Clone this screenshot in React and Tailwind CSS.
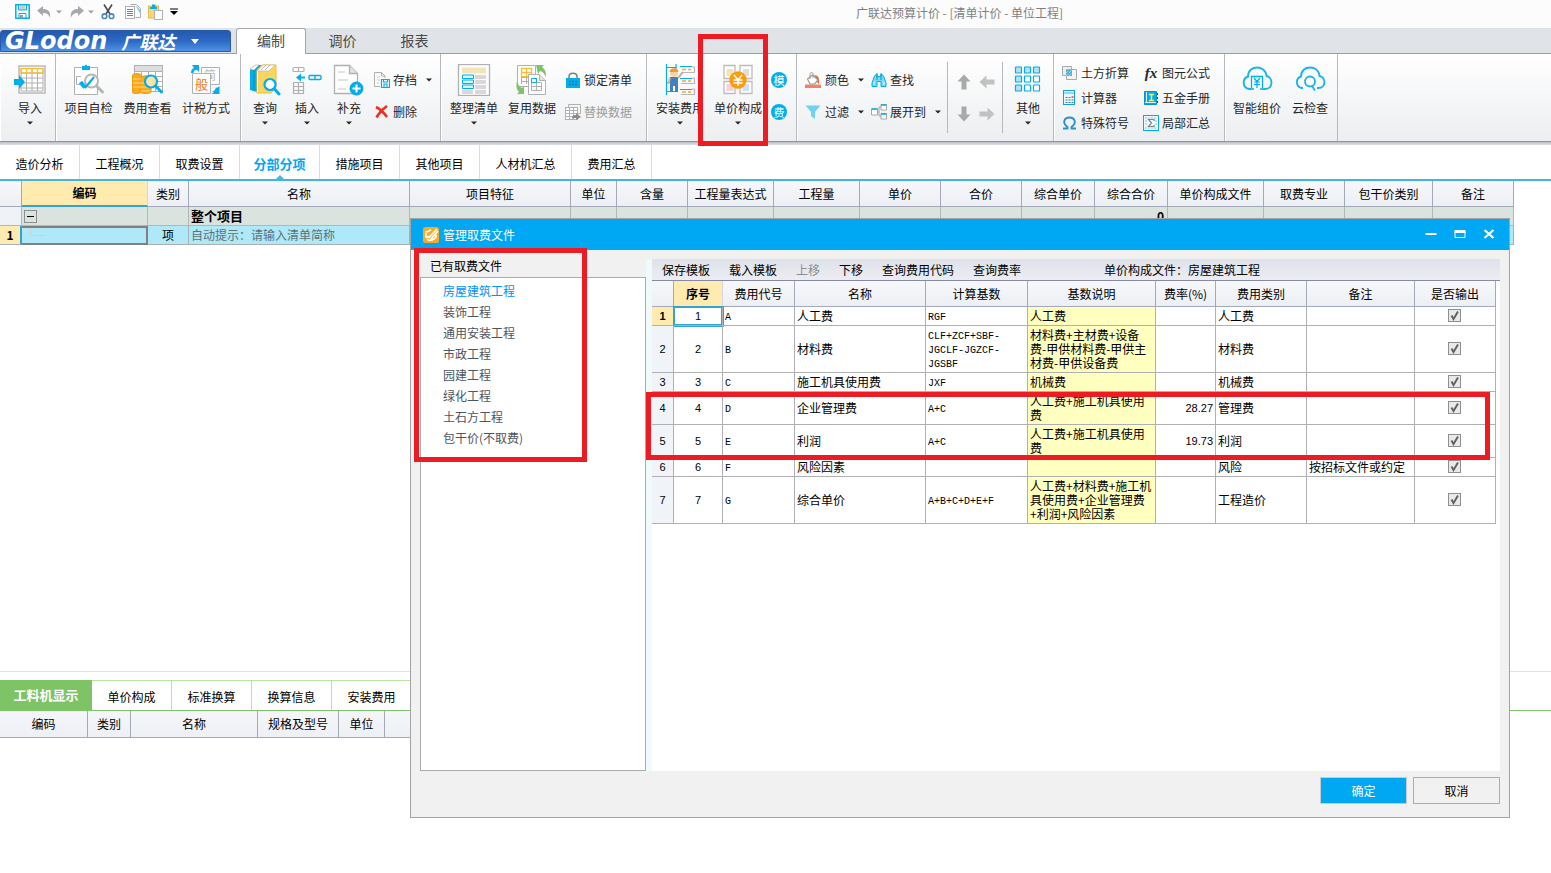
import React from "react";

const B = "#00afe9";
const G = "#b0b0b0";

function Svg({ w, h, children, className = "" }) {
  return (
    <svg width={w} height={h} viewBox={`0 0 ${w} ${h}`} fill="none" aria-hidden="true" className={`shrink-0 ${className}`}>
      {children}
    </svg>
  );
}

function Caret({ className = "" }) {
  return (
    <Svg w={6} h={4} className={className}>
      <path d="M0 0.500h6L3 3.500z" fill="currentColor" />
    </Svg>
  );
}

/* ---------- quick access icons ---------- */
const SaveIcon = () => (
  <Svg w={15} h={15}>
    <rect x="0.800" y="0.800" width="13.400" height="13.400" stroke={B} strokeWidth="1.500" />
    <path d="M3.500 1v5h8V1M4 14V9.500h7V14" stroke={B} />
    <path d="M4.500 3h6M4.500 5h6" stroke="#9a9a9a" />
    <rect x="5" y="11" width="3" height="3" fill="#9a9a9a" />
  </Svg>
);
const UndoIcon = ({ flip }) => (
  <Svg w={15} h={14}>
    <path transform={flip ? "matrix(-1 0 0 1 15 0)" : undefined} d="M0 5.500 6 1v3c5 0 8 2.500 7 9-1-3.500-3-5-7-5v3z" fill="#a5a9ad" />
  </Svg>
);
const CutIcon = () => (
  <Svg w={14} h={16}>
    <path d="M3 0.500 9 10M11 0.500 5 10" stroke="#4c4c4c" strokeWidth="1.600" />
    <circle cx="3.500" cy="12.200" r="2.300" stroke="#4a87bd" strokeWidth="1.600" />
    <circle cx="10.500" cy="12.200" r="2.300" stroke="#4a87bd" strokeWidth="1.600" />
  </Svg>
);
const CopyIcon = () => (
  <Svg w={16} h={15}>
    <path d="M5.500 0.500h6l4 4v9h-5" stroke={G} />
    <path d="M10 1l5.500 5v4z" fill="#6fcff0" />
    <rect x="0.500" y="2.500" width="9" height="12" fill="#fff" stroke={G} />
    <path d="M2 5.500h6M2 7.500h6M2 9.500h6M2 11.500h6" stroke={B} />
  </Svg>
);
const PasteIcon = () => (
  <Svg w={16} h={16}>
    <rect x="0.500" y="2" width="10" height="12" fill="#fcd56d" stroke="#e7b94c" />
    <path d="M2 3h7v2H2zM4 0.500h3.500V3H4z" fill={B} />
    <rect x="6.500" y="6.500" width="8" height="9" fill="#fff" stroke={G} />
  </Svg>
);

/* ---------- large ribbon icons ---------- */
const ImportIcon = () => (
  <Svg w={34} h={32}>
    <rect x="6" y="2" width="26" height="27" fill="#fff" stroke={G} strokeWidth="1.300" />
    <path d="M8 9h22M8 14h22M8 19h22M8 24h22M8 4.500V27M13.500 4v23M19 4v23M24.500 4v23M30 4v23M8 27h22" stroke={G} />
    <path d="M8 4.500h22V9H8zM13.500 4.500V9M19 4.500V9M24.500 4.500V9" stroke="#f8bf3a" strokeWidth="1.300" />
    <path d="M1 15h5v-4l6 7-6 7v-4H1z" fill={B} />
  </Svg>
);
const CheckDocIcon = () => (
  <Svg w={34} h={32}>
    <path d="M2.500 3.500h23v27h-23z" fill="#fff" stroke={G} />
    <path d="M10 2h2.500L14 0.500 15.500 2H18v4h-8z" fill={B} />
    <path d="M9 12.500H4.500v8H8" stroke={G} />
    <circle cx="19.500" cy="17" r="6.500" fill="#fff" stroke="#b5b5b5" strokeWidth="2" />
    <path d="m24.500 22 6 6" stroke="#b5b5b5" strokeWidth="3" strokeLinecap="round" />
    <path d="m8.500 18 4.500 5.500" stroke={B} strokeWidth="4" />
    <path d="m13 24 9-11" stroke={B} strokeWidth="2" />
  </Svg>
);
const FeeViewIcon = () => (
  <Svg w={34} h={32}>
    <path d="M3.500 1.500h28v26h-28z" fill="#fff" stroke={G} />
    <path d="M3.500 1.500h28v6h-28z" fill="#dedede" stroke={G} />
    <path d="M3 12.500h28M3 17.500h28M3 22.500h28M10.500 7v21M17.500 7v21M24.500 7v21" stroke={G} />
    <path d="M1.500 11c2-2 7-2 9 0v17c-2 2-9 2-9 0z" fill="#fba91d" stroke="#ef9a10" />
    <path d="M9 14c3-3 9-3 11 0v14c-2 2-9 2-11 0z" fill="#fba91d" stroke="#ef9a10" />
    <path d="M2 15h8M2 19h8M2 23h8M10 19h9M10 23h9M10 27h9" stroke="#ffd980" />
    <circle cx="20" cy="17.500" r="6" fill="#ffe3a6" stroke={B} strokeWidth="2.200" />
    <path d="m24.500 22 6 6" stroke={B} strokeWidth="3" strokeLinecap="round" />
  </Svg>
);
const TaxIcon = () => (
  <Svg w={34} h={32}>
    <path d="M12.500 3.500h18v17h-18z" fill="#fff" stroke={G} />
    <text x="15" y="16" fontSize="12" fill="#b9b9b9" fontFamily="Noto Sans CJK SC, sans-serif">简</text>
    <path d="M3.500 9.500h18v20h-18z" fill="#fff" stroke={G} />
    <text x="6" y="25" fontSize="13" fill="#ea7a1c" fontFamily="Noto Sans CJK SC, sans-serif">般</text>
    <path d="M2 9c0-3 1-4 3-5L3 1h7v7L8 6C5 6 5 7 4.500 9zM30.500 22v8h-8l2.500-2-2-1c3 0 3-1 4-4l1 1z" fill={B} />
  </Svg>
);
const QueryIcon = () => (
  <Svg w={34} h={32}>
    <path d="M2 5 7 1h7v24l-5 3-7-2z" fill={B} />
    <path d="M9 6l5-5h14v23l-5 5H9z" fill="#fcd55f" stroke="#f1bd47" />
    <path d="M2 5 7 1h4L6 6zM9 7l6-6h12l-6 6z" fill="#fff" stroke="#bdbdbd" strokeWidth="0.800" />
    <path d="m13 6 5-5M17 6l5-5" stroke="#aaa" strokeWidth="0.800" />
    <path d="M9.500 7v21" stroke="#fff" />
    <path d="M6 6v20" stroke="#0b8fc0" />
    <circle cx="22" cy="20.500" r="5.500" fill="#fff" stroke={B} strokeWidth="2.200" />
    <path d="m26.500 25 4.500 5" stroke={B} strokeWidth="3" strokeLinecap="round" />
  </Svg>
);
const InsertIcon = () => (
  <Svg w={34} h={32}>
    <path d="M4 3.500h9a1 1 0 0 1 1 1v2a1 1 0 0 1-1 1H4a1 1 0 0 1-1-1v-2a1 1 0 0 1 1-1zM8.500 3.500v4M3.500 18.500h10v11h-10zM8.500 18.500v11M3.500 22.500h10M3.500 26.500h10" stroke={G} strokeWidth="1.200" />
    <path d="M6 13.500l5-4v3h4v2h-4v3z" fill={B} />
    <path d="M20 11.500h10a1 1 0 0 1 1 1v2a1 1 0 0 1-1 1H20a1 1 0 0 1-1-1v-2a1 1 0 0 1 1-1zM25 11.500v4" stroke={B} strokeWidth="1.400" />
  </Svg>
);
const AddIcon = () => (
  <Svg w={34} h={32}>
    <path d="M2.500 1.500h15l8 8v20h-23z" fill="#fff" stroke={G} strokeWidth="1.300" />
    <path d="M17.500 1.500v8h8" fill="#e2e2e2" stroke={G} strokeWidth="1.300" />
    <path d="M6 8h7M6 16h10M6 25h8" stroke="#d9d9d9" strokeWidth="1.500" />
    <circle cx="24.500" cy="24.500" r="6.700" fill={B} stroke="#1b94c8" strokeWidth="0.500" />
    <path d="M24.500 20.500v8M20.500 24.500h8" stroke="#fff" strokeWidth="2" />
  </Svg>
);
const OrganizeIcon = () => (
  <Svg w={34} h={32}>
    <rect x="1.500" y="0.500" width="31" height="31" fill="#fff" stroke={G} strokeWidth="1.300" />
    <path d="M5 3.500h24v6H5z" fill="#f3e4b9" />
    <path d="M18 11h11v4H18zM18 16h11v4H18zM18 21h11v4H18zM18 26h11v4H18zM5 26h11v4H5z" fill="#d9d7db" />
    <path d="M5.500 11h11v3.500h-11zM5.500 16h11v3.500h-11zM5.500 21h11v3.500h-11z" fill="#d9f3fb" stroke={B} />
  </Svg>
);
const ReuseIcon = () => (
  <Svg w={34} h={32}>
    <path d="M2.500 1.500h18v21h-18z" fill="#fff" stroke={G} />
    <path d="M6.500 9v11M11.500 9v11M6 13.500h10M6 17.500h10" stroke={G} />
    <path d="M6.500 4.500h10v8h-10zM11.500 4.500v8M6.500 8.500h10" stroke="#f8bf3a" strokeWidth="1.300" />
    <path d="M13.500 10.500h11l6 6v14h-17z" fill="#fff" stroke={G} />
    <path d="M24.500 10.500v6h6" fill="#e2e2e2" stroke={G} />
    <path d="M16.500 18.500h10v8h-10zM21.500 14v12M16.500 22.500h10" stroke={G} />
    <path d="M16.500 14.500h5v4h-5z" stroke={B} />
    <path d="M21 1h8l-2 2c3 2 4 5 4 10-2-4-4-6-6-6l-2 3zM2 17c1 4 3 6 5 7l2-2v8H2l2-2c-3-3-3-7-2-11z" fill="#7cc36a" />
  </Svg>
);
const InstallIcon = () => (
  <Svg w={34} h={32}>
    <path d="M3.500 0v31M13 0v6M3 3.500h10M3 18.500h9M3 27.500h9" stroke={B} strokeWidth="1.200" />
    <path d="M29 3h2.500v5.500H18M29 14h2.500v5.500H18M29 25h2.500v5.500H18" stroke="#b4b8bc" strokeWidth="1.200" />
    <path d="M17 2.500h12M17 14.500h12M17 25.500h12" stroke={B} />
    <path d="M19 5.500h4M25 5.500h3M19 17h4M25 17h3M19 28h4M25 28h3" stroke="#f4a83d" strokeWidth="1.300" />
    <circle cx="11" cy="9" r="4" fill="#f7d2ac" />
    <path d="M6.500 8c0-5 9-5 9 0z" fill="#f39b22" />
    <path d="M7 13h8v9H7z" fill="#4181be" />
    <path d="m15 14 5-6" stroke="#c6b3a0" strokeWidth="2" />
    <path d="M7 14l-2 6" stroke="#e6b98e" strokeWidth="2" />
    <path d="M7 21h3v7H7zM12 21h3v7h-3z" fill="#4181be" />
  </Svg>
);
const UnitPriceIcon = () => (
  <Svg w={34} h={32}>
    <path d="M3 1.500h11v13H3zM19 1.500h12v13H19zM3 17.500h11v12H3zM19 17.500h12v12H19z" fill="#fff" stroke="#bcbcbc" strokeWidth="1.300" />
    <path d="M5.500 5h7v7h-7z" fill="#f4e3b5" />
    <path d="M22 5h6v7h-6z" fill="#dedede" />
    <path d="M5.500 20h7v7h-7z" fill="#f3d2d6" />
    <path d="M22 20h6v7h-6z" fill="#cbe0f2" />
    <circle cx="17" cy="16" r="8.700" fill="#fb9b0d" />
    <path d="m13 11 4 5 4-5M12.500 16h9M12.500 19h9M17 16v6" stroke="#fff" strokeWidth="1.600" />
  </Svg>
);
const OtherIcon = () => (
  <Svg w={34} h={32}>
    {[3, 12, 21].map((y) =>
      [4.500, 13.500, 22.500].map((x) => (
        <rect key={`${x}-${y}`} x={x} y={y} width="6" height="6" rx="0.600" fill={y === 3 || x === 4.5 ? "#b9dff0" : "#fff"} stroke={B} strokeWidth="1.200" />
      ))
    )}
  </Svg>
);
const CloudPriceIcon = () => (
  <Svg w={34} h={32}>
    <path d="M11 25H9a6.500 6.500 0 0 1-1-12.500C8 6 13 3.500 17 3.500S26 6 26.500 12c7 1.500 6.500 13-1 13h-2" stroke="#18b5e6" strokeWidth="1.900" />
    <path d="M11.500 24V12.500h11V24M10 25h4M20 25h4" stroke={B} strokeWidth="1.300" />
    <path d="m14 14 3 3.500L20 14M14 18h6M14 20.500h6M17 17.500V24" stroke={B} strokeWidth="1.200" />
  </Svg>
);
const CloudCheckIcon = () => (
  <Svg w={34} h={32}>
    <path d="M10 24H8.500A6 6 0 0 1 8 12.500C8 6.500 12.500 3.500 17 3.500S26 6 26.500 12c7 1.500 6.500 12-1 12H24" stroke="#18b5e6" strokeWidth="1.900" />
    <circle cx="17" cy="17.500" r="5" stroke="#18b5e6" strokeWidth="1.800" />
    <path d="m19 22 3 4.500" stroke="#18b5e6" strokeWidth="1.800" />
  </Svg>
);

/* ---------- small ribbon icons ---------- */
const ArchiveIcon = () => (
  <Svg w={16} h={16}>
    <path d="M6 14.500H0.500V0.500h7l3.500 3.500v2M7.500 0.500V4H11" stroke={G} />
    <path d="M3 5h3M3 8h3M3 11h2" stroke="#c9c9c9" />
    <path d="M7.500 7.500h8v8h-8zM9.500 7.500V10h4V7.500M10 15v-3h3v3" stroke={B} strokeWidth="1.200" fill="#fff" />
  </Svg>
);
const DeleteIcon = () => (
  <Svg w={16} h={14}>
    <path d="M2 2c4 2 8 6 11 10M13 1C9 4 5 8 2.500 12.500" stroke="#ee2f24" strokeWidth="2.600" />
  </Svg>
);
const LockIcon = () => (
  <Svg w={16} h={16}>
    <path d="M4 7V4.500C4 0 12 0 12 4.500V7" stroke="#7f7f7f" strokeWidth="1.500" />
    <rect x="1" y="6" width="14" height="10" fill={B} />
    <path d="M4 9.500h2M7 9.500h2M10 9.500h2M4 12.500h2M7 12.500h2M10 12.500h2" stroke="#087ab3" strokeWidth="1.400" />
  </Svg>
);
const ReplaceIcon = () => (
  <Svg w={16} h={16}>
    <path d="M3.500 4V0.500h12v9h-4" stroke={G} />
    <rect x="0.500" y="3.500" width="12" height="12" fill="#fff" stroke={G} />
    <path d="M0.500 6.500h12M0.500 9.500h12M0.500 12.500h12M4.500 3.500v12M8.500 3.500v12" stroke={G} />
    <path d="M7 15c0-3 1-4 4-4V9l5 4-5 3v-2c-2 0-3 0-4 1z" fill="#8b8b8b" />
  </Svg>
);
const ColorIcon = () => (
  <Svg w={17} h={16}>
    <path d="M0 12.500h16V16H0z" fill="#f58266" />
    <path d="M9 3c4 0 6 3 5 9-2-1-2-3-2-5z" fill="#e2711f" />
    <path d="m2.500 7 5-4 5.500 5-3.500 4H5z" fill="#fff" stroke="#9b9b9b" strokeWidth="1.200" />
    <path d="M5 7V2c0-2 3-2 3 0v4" stroke="#9b9b9b" />
  </Svg>
);
const FilterIcon = () => (
  <Svg w={17} h={15}>
    <path d="M0.500 0.500h15L10 7v7l-4-3V7z" fill="#6fd2f3" />
  </Svg>
);
const FindIcon = () => (
  <Svg w={16} h={16}>
    <path d="M3.500 4 6 1.500v3h4v-3L12.500 4l2.500 7v3.500h-5V9.500H6v5H1V11z" fill="#7dd8f5" stroke={B} />
    <path d="M3 9.500v3M13 9.500v3" stroke="#fff" />
    <path d="M6 2v6M10 2v6" stroke="#0a93c4" />
  </Svg>
);
const ExpandIcon = () => (
  <Svg w={16} h={16}>
    <path d="M0.500 5h6v6h-6zM10 0.500h5.500V6H10zM10 9.500h5.500V15H10z" fill="#fff" stroke="#a6a6a6" />
    <path d="M0.500 5h6M10 1h5.500M10 10h5.500" stroke={B} strokeWidth="1.500" />
    <path d="M6.500 8H8M8 3v9M8 3h2M8 12h2" stroke="#a6a6a6" />
  </Svg>
);
const EarthIcon = () => (
  <Svg w={16} h={14}>
    <path d="M0.500 0.500h9v9h-9z" fill="#eee" stroke="#a9a9a9" />
    <path d="M4.500 3.500h10v10h-10z" fill="#f4f4f4" stroke="#a9a9a9" />
    <path d="M4 4h6v6H4z" fill="#4ab4d6" />
    <path d="m4 7 3-3M4 10l6-6M7 10l3-3" stroke="#d8f1fa" strokeDasharray="1 1" />
  </Svg>
);
const CalcIcon = () => (
  <Svg w={16} h={16}>
    <rect x="1.500" y="0.500" width="11" height="14" fill="#eaf8fd" stroke="#189fd0" />
    <path d="M2 3h10" stroke="#8ed9f3" strokeWidth="2" />
    <path d="M3.500 7.500h2M6.500 7.500h2M3.500 10h2M6.500 10h2M3.500 12.500h2M6.500 12.500h2M9.500 12.500h2M9.500 10h2" stroke="#3781a5" />
    <path d="M9.500 7h2" stroke="#e94b3c" strokeWidth="1.600" />
  </Svg>
);
const OmegaIcon = () => (
  <Svg w={16} h={14}>
    <path d="M1 12.500h4.500V11C0 7 2 1.500 7.500 1.500S15 7 9.500 11v1.500H14" stroke="#2b91cc" strokeWidth="1.900" />
  </Svg>
);
const BookIcon = () => (
  <Svg w={16} h={15}>
    <path d="M1.500 0.500h12v13h-12z" fill={B} stroke="#0b91ca" />
    <path d="M3.500 1v10.500M2 11.500h11" stroke="#d8f2fb" />
    <path d="M6 3.500h5M6 9.500h5M8.500 4v6" stroke="#f7ec5b" strokeWidth="1.500" />
    <path d="M14.500 2v2M14.500 6v2M14.500 10v2" stroke="#444" />
  </Svg>
);
const SumIcon = () => (
  <Svg w={16} h={16}>
    <rect x="0.500" y="0.500" width="15" height="15" fill="#eef8fb" stroke={B} />
    <path d="M2 3h12M2 13h12M2 6h2M2 9h2M12 6h2M12 9h2" stroke="#7fcbe6" strokeDasharray="2 1" />
    <path d="M11 6V4.500H5.500L8.500 8l-3 3.500H11V10" stroke="#858585" strokeWidth="1.200" />
  </Svg>
);
const Arrow = ({ dir, dark }) => {
  const rot = { up: 0, right: 90, down: 180, left: 270 }[dir];
  return (
    <Svg w={16} h={16}>
      <path transform={`rotate(${rot} 8 8)`} d="M8 0.500 14.500 7.500H10.500V15.500H5.500V7.500H1.500z" fill={dark ? "#a9a9a9" : "#c2c2c2"} />
    </Svg>
  );
};

/* ---------- ribbon building blocks ---------- */
function Big({ icon, label, caret, w = "w-[58px]" }) {
  return (
    <button type="button" className={`flex ${w} shrink-0 flex-col items-center pt-[10px] text-xs leading-4 whitespace-nowrap`}>
      {icon}
      <span className="mt-1">{label}</span>
      {caret && <Caret className="mt-[5px]" />}
    </button>
  );
}
function Small({ icon, label, caret, disabled }) {
  return (
    <button type="button" disabled={disabled} className="flex h-5 items-center gap-[3px] text-xs leading-5 whitespace-nowrap disabled:text-[#9b9b9b]">
      {icon}
      <span>{label}</span>
      {caret && <Caret className="ml-[6px]" />}
    </button>
  );
}
function Group({ w, children }) {
  return <div className={`flex ${w} shrink-0 border-r border-[#b4b8bf] bg-linear-to-b from-white to-[#eceef0] shadow-[inset_1px_0_0_#ffffff]`}>{children}</div>;
}

function Ribbon() {
  return (
    <div className="relative z-10 flex h-[88px] border-b border-[#8f9499] bg-linear-to-b from-white to-[#eceef0] text-[#262626]">
      <Group w="w-14"><Big w="w-[60px]" icon={<ImportIcon />} label="导入" caret /></Group>
      <Group w="w-[185px]">
        <div className="flex pl-[3px]">
          <Big w="w-[59px]" icon={<CheckDocIcon />} label="项目自检" />
          <Big w="w-[59px]" icon={<FeeViewIcon />} label="费用查看" />
          <Big icon={<TaxIcon />} label="计税方式" />
        </div>
      </Group>
      <Group w="w-[200px]">
        <div className="flex pl-[3px]">
          <Big w="w-[42px]" icon={<QueryIcon />} label="查询" caret />
          <Big w="w-[42px]" icon={<InsertIcon />} label="插入" caret />
          <Big w="w-[42px]" icon={<AddIcon />} label="补充" caret />
        </div>
        <div className="flex flex-col gap-3 pt-4 pl-1">
          <Small icon={<ArchiveIcon />} label="存档" caret />
          <Small icon={<DeleteIcon />} label="删除" />
        </div>
      </Group>
      <Group w="w-[206px]">
        <div className="flex pl-1">
          <Big icon={<OrganizeIcon />} label="整理清单" caret />
          <Big icon={<ReuseIcon />} label="复用数据" />
        </div>
        <div className="flex flex-col gap-3 pt-4 pl-1">
          <Small icon={<LockIcon />} label="锁定清单" />
          <Small icon={<ReplaceIcon />} label="替换数据" disabled />
        </div>
      </Group>
      <Group w="w-[150px]">
        <div className="flex pl-1">
          <Big icon={<InstallIcon />} label="安装费用" caret />
          <div className="relative">
            <Big icon={<UnitPriceIcon />} label="单价构成" caret />
            <div className="pointer-events-none absolute -top-5 -left-[11px] h-28 w-[70px] border-[5px] border-[#ed1c24]" />
          </div>
        </div>
        <div className="flex flex-col gap-4 pt-[18px] pl-1">
          <button type="button" className="size-4 rounded-full bg-[#00afe9] text-[11px] leading-4 text-white">模</button>
          <button type="button" className="size-4 rounded-full bg-[#00afe9] text-[11px] leading-4 text-white">费</button>
        </div>
      </Group>
      <Group w="w-[257px]">
        <div className="flex flex-col gap-3 pt-4 pl-2">
          <Small icon={<ColorIcon />} label="颜色" caret />
          <Small icon={<FilterIcon />} label="过滤" caret />
        </div>
        <div className="flex flex-col gap-3 pt-4 pl-[7px]">
          <Small icon={<FindIcon />} label="查找" />
          <Small icon={<ExpandIcon />} label="展开到" caret />
        </div>
        <div className="my-2 ml-[6px] grid grid-cols-2 content-center gap-x-2 gap-y-4 border-x border-[#b4b8bf] px-2">
          <Arrow dir="up" dark />
          <Arrow dir="left" />
          <Arrow dir="down" dark />
          <Arrow dir="right" />
        </div>
        <Big w="w-[50px]" icon={<OtherIcon />} label="其他" caret />
      </Group>
      <Group w="w-[171px]">
        <div className="grid grid-cols-[81px_81px] content-start gap-y-[5px] pt-[9px] pl-2">
          <Small icon={<EarthIcon />} label="土方折算" />
          <Small icon={<span className="w-4 text-center font-['Liberation_Serif',serif] text-[15px] font-bold italic">fx</span>} label="图元公式" />
          <Small icon={<CalcIcon />} label="计算器" />
          <Small icon={<BookIcon />} label="五金手册" />
          <Small icon={<OmegaIcon />} label="特殊符号" />
          <Small icon={<SumIcon />} label="局部汇总" />
        </div>
      </Group>
      <Group w="w-[113px]">
        <div className="flex pl-[3px]">
          <Big icon={<CloudPriceIcon />} label="智能组价" />
          <Big w="w-[48px]" icon={<CloudCheckIcon />} label="云检查" />
        </div>
      </Group>
    </div>
  );
}

/* ---------- main grid ---------- */
const mainCols = [
  ["", 22], ["编码", 126], ["类别", 41], ["名称", 221], ["项目特征", 161], ["单位", 46], ["含量", 71], ["工程量表达式", 86],
  ["工程量", 86], ["单价", 81], ["合价", 81], ["综合单价", 73], ["综合合价", 73], ["单价构成文件", 96], ["取费专业", 81], ["包干价类别", 88], ["备注", 81],
];

function MainGrid() {
  const rest = mainCols.slice(4);
  return (
    <table className="w-[1514px] table-fixed border-separate border-spacing-0 text-xs leading-4 whitespace-nowrap">
      <colgroup>{mainCols.map(([n, w], i) => <col key={i} style={{ width: w }} />)}</colgroup>
      <thead>
        <tr className="h-[26px]">
          {mainCols.map(([n], i) => (
            <th
              key={i}
              className={
                i === 1
                  ? "border-r border-b-2 border-r-[#d8d8d8] border-b-[#35a3d0] bg-[#ffebb0] p-0 font-bold"
                  : "border-r border-b border-[#a3a9b6] bg-linear-to-b from-[#f7f8fa] to-[#eceff5] p-0 font-normal"
              }
            >
              {n}
            </th>
          ))}
        </tr>
      </thead>
      <tbody>
        <tr className="h-[19px] bg-[#dae3de] [&>td]:border-r [&>td]:border-b [&>td]:border-[#b3b6b5] [&>td]:p-0">
          <td className="bg-[#eff2f7]" />
          <td className="pl-[2px]!">
            <button type="button" aria-label="折叠" className="flex size-[13px] items-center justify-center border border-[#8d8f8e]">
              <span className="h-px w-[7px] bg-black" />
            </button>
          </td>
          <td />
          <td className="pl-[2px]! text-[13px] font-bold">整个项目</td>
          {rest.map(([n], i) => <td key={i} className="pr-[3px]! text-right font-bold">{n === "综合合价" ? "0" : ""}</td>)}
        </tr>
        <tr className="h-[19px] bg-[#aee8f9] [&>td]:border-r [&>td]:border-b [&>td]:border-[#a8b0b4] [&>td]:p-0">
          <td className="border-r-2! border-r-[#35a3d0]! bg-[#ffebb0] text-center font-bold">1</td>
          <td className="border-2! border-l-0! border-[#808080]! pl-2!">
            <div className="-mt-2 h-2 w-4 border-b border-l border-[#c9d3d8]" />
          </td>
          <td className="text-center">项</td>
          <td className="pl-[2px]! text-[#5f7177]">自动提示：请输入清单简称</td>
          {rest.map(([n], i) => <td key={i} />)}
        </tr>
      </tbody>
    </table>
  );
}

/* ---------- dialog ---------- */
const files = ["房屋建筑工程", "装饰工程", "通用安装工程", "市政工程", "园建工程", "绿化工程", "土石方工程", "包干价(不取费)"];
const feeCols = [["", 22], ["序号", 49], ["费用代号", 72], ["名称", 131], ["计算基数", 102], ["基数说明", 128], ["费率(%)", 60], ["费用类别", 91], ["备注", 108], ["是否输出", 81]];
const feeRows = [
  ["A", "人工费", "RGF", "人工费", "", "人工费", "", "h-[19px]"],
  ["B", "材料费", "CLF+ZCF+SBF-\nJGCLF-JGZCF-\nJGSBF", "材料费+主材费+设备\n费-甲供材料费-甲供主\n材费-甲供设备费", "", "材料费", "", "h-[47px]"],
  ["C", "施工机具使用费", "JXF", "机械费", "", "机械费", "", "h-[19px]"],
  ["D", "企业管理费", "A+C", "人工费+施工机具使用\n费", "28.27", "管理费", "", "h-[33px]"],
  ["E", "利润", "A+C", "人工费+施工机具使用\n费", "19.73", "利润", "", "h-[33px]"],
  ["F", "风险因素", "", "", "", "风险", "按招标文件或约定", "h-[19px]"],
  ["G", "综合单价", "A+B+C+D+E+F", "人工费+材料费+施工机\n具使用费+企业管理费\n+利润+风险因素", "", "工程造价", "", "h-[47px]"],
];

function FeeTable() {
  return (
    <table className="w-[844px] table-fixed border-separate border-spacing-0 text-xs leading-[14px]">
      <colgroup>{feeCols.map(([n, w], i) => <col key={i} style={{ width: w }} />)}</colgroup>
      <thead>
        <tr className="h-[26px]">
          {feeCols.map(([n], i) => (
            <th
              key={i}
              className={
                i === 1
                  ? "border-r border-b border-r-[#d8d8d8] border-b-[#35a3d0] bg-[#ffebb0] p-0 font-bold"
                  : "border-r border-b border-[#a3a9b6] bg-linear-to-b from-[#f7f8fa] to-[#eceff5] p-0 font-normal"
              }
            >
              {n}
            </th>
          ))}
        </tr>
      </thead>
      <tbody>
        {feeRows.map(([code, name, base, desc, rate, kind, note, h], i) => (
          <tr key={code} className={`${h} [&>td]:border-r [&>td]:border-b [&>td]:border-[#b0b0b4] [&>td]:py-0`}>
            <td className={`px-0 text-center font-['Liberation_Sans',sans-serif] text-[11px] ${i === 0 ? "bg-[#ffebb0] font-bold" : "bg-[#f0f3f8]"}`}>{i + 1}</td>
            <td className={`px-0 text-center font-['Liberation_Sans',sans-serif] text-[11px] ${i === 0 ? "shadow-[inset_0_0_0_1px_#35a3d0,0_0_0_1px_#35a3d0]" : ""}`}>{i + 1}</td>
            <td className="px-[2px] pt-[3px]! font-['Liberation_Mono',monospace] text-[10px]">{code}</td>
            <td className="px-[2px]">{name}</td>
            <td className="px-[2px] pt-[3px]! font-['Liberation_Mono',monospace] text-[10px] whitespace-pre">{base}</td>
            <td className="bg-[#ffffc0] px-[2px] whitespace-pre">{desc}</td>
            <td className="px-[2px] text-right font-['Liberation_Sans',sans-serif] text-[11px]">{rate}</td>
            <td className="px-[2px]">{kind}</td>
            <td className="px-[2px] whitespace-nowrap">{note}</td>
            <td className="pr-[2px] pb-[2px]! pl-0">
              <label className="relative mx-auto block size-[13px]">
                <input type="checkbox" defaultChecked aria-label={`${name}输出`} className="peer block size-[13px] appearance-none border border-[#8e8f8f] bg-[#e9e9ea]" />
                <svg width="13" height="13" viewBox="0 0 13 13" fill="none" aria-hidden="true" className="pointer-events-none absolute inset-0 hidden peer-checked:block">
                  <path d="m3.500 6.500 2 3.500 4.500-7.500" stroke="#606066" strokeWidth="1.900" />
                </svg>
              </label>
            </td>
          </tr>
        ))}
      </tbody>
    </table>
  );
}

function Dialog() {
  return (
    <section role="dialog" aria-label="管理取费文件" className="absolute top-[218px] left-[410px] z-20 w-[1100px] border border-[#a3a3a3] bg-[#f1f1f1] text-xs text-black">
      <header className="flex h-[31px] items-center bg-[#00a8f3] pr-[6px] pl-3 text-white">
        <Svg w={16} h={16}>
          <rect width="16" height="16" rx="2.500" fill="#fba925" />
          <path d="M2.500 4.500C4 6 6 4 8 2.500M3 6v4c0 1 2 0 3-1M13 8c1 4-7 7-9 4M5.500 11 14 2M7.500 12.500 15 4" stroke="#fff" strokeWidth="1.700" />
        </Svg>
        <h2 className="ml-1 flex-1">管理取费文件</h2>
        <button type="button" aria-label="最小化" className="flex w-[29px] justify-center"><Svg w={12} h={12}><path d="M0.500 5h11" stroke="#fff" strokeWidth="2" /></Svg></button>
        <button type="button" aria-label="最大化" className="flex w-[29px] justify-center"><Svg w={12} h={12}><path d="M1 2.500h10v6H1z" stroke="#fff" /><path d="M0.500 2.500h11" stroke="#fff" strokeWidth="3" /></Svg></button>
        <button type="button" aria-label="关闭" className="flex w-[29px] justify-center"><Svg w={12} h={12}><path d="m1.500 1 9 8M10.500 1l-9 8" stroke="#fff" strokeWidth="2.200" /></Svg></button>
      </header>
      <div className="flex h-[521px] px-[9px] pt-[9px]">
        <aside className="flex w-[226px] flex-col">
          <h3 className="h-[18px] pl-[10px] leading-[14px]">已有取费文件</h3>
          <ul className="flex-1 border border-[#ababab] bg-white pt-[2px] pl-[22px] text-[#4d5560]">
            {files.map((f, i) => (
              <li key={f}><button type="button" className={`block h-[21px] leading-[21px] ${i === 0 ? "text-[#0090ff]" : ""}`}>{f}</button></li>
            ))}
          </ul>
        </aside>
        <div className="w-[6px] bg-[#effafb]" />
        <div className="min-w-0 flex-1 bg-white">
          <div className="flex h-[22px] items-center gap-[19px] border-b border-[#8589a3] bg-linear-to-b from-[#dfe2ea] to-[#ecedf2] pl-[10px] whitespace-nowrap">
            <button type="button">保存模板</button>
            <button type="button">载入模板</button>
            <button type="button" disabled className="text-[#8d8d90]">上移</button>
            <button type="button">下移</button>
            <button type="button">查询费用代码</button>
            <button type="button">查询费率</button>
            <span className="ml-16">单价构成文件：房屋建筑工程</span>
          </div>
          <FeeTable />
        </div>
      </div>
      <footer className="flex justify-end gap-[6px] px-[9px] pt-[6px] pb-[13px]">
        <button type="button" className="h-[27px] w-[87px] border border-[#c6cdd1] bg-[#00a8f3] text-white">确定</button>
        <button type="button" className="h-[27px] w-[87px] border border-[#adadad] bg-[#f1f1f1]">取消</button>
      </footer>
      <div className="pointer-events-none absolute top-[29px] left-[3px] h-[214px] w-[173px] border-[5px] border-[#ed1c24]" />
      <div className="pointer-events-none absolute top-[173px] left-[235px] h-[68px] w-[844px] border-[5px] border-[#ed1c24]" />
    </section>
  );
}

function BottomPanel() {
  const cols = [["编码", 88], ["类别", 43], ["名称", 127], ["规格及型号", 81], ["单位", 46], ["", 560]];
  return (
    <div className="h-[202px] shrink-0 border-t border-[#e2e2e2] pt-2 text-xs">
      <div className="flex h-[31px] items-stretch border-b border-[#7cc46c]">
        <button type="button" className="w-[92px] bg-[#7fc367] text-[13px] font-bold text-white">工料机显示</button>
        {["单价构成", "标准换算", "换算信息", "安装费用"].map((t) => (
          <button type="button" key={t} className="w-20 border-t border-r border-[#b5e59e] bg-white pt-[3px]">{t}</button>
        ))}
      </div>
      <table className="w-[945px] table-fixed border-separate border-spacing-0">
        <colgroup>{cols.map(([n, w], i) => <col key={i} style={{ width: w }} />)}</colgroup>
        <thead>
          <tr className="h-[27px]">
            {cols.map(([n], i) => (
              <th key={i} className="border-r border-b border-[#a3a9b6] bg-linear-to-b from-[#f5f6f9] to-[#edf0f5] p-0 font-normal">{n}</th>
            ))}
          </tr>
        </thead>
      </table>
    </div>
  );
}

export default function App() {
  return (
    <div className="relative flex min-h-screen flex-col overflow-hidden bg-white font-['Noto_Sans_CJK_SC',sans-serif] text-xs text-black">
      <header className="flex h-7 items-center bg-[#fcfcfc] pb-[5px] text-[#a0a0a0]">
        <div className="flex w-[368px] shrink-0 items-center pl-[15px]">
          <button type="button" aria-label="保存" className="w-[22px]"><SaveIcon /></button>
          <button type="button" aria-label="撤销" className="w-[19px]"><UndoIcon /></button>
          <Caret className="mr-[7px]" />
          <button type="button" aria-label="恢复" className="w-[19px]"><UndoIcon flip /></button>
          <Caret className="mr-[7px]" />
          <button type="button" aria-label="剪切" className="w-6"><CutIcon /></button>
          <button type="button" aria-label="复制" className="w-[23px]"><CopyIcon /></button>
          <button type="button" aria-label="粘贴" className="w-[22px]"><PasteIcon /></button>
          <button type="button" aria-label="自定义快速访问工具栏" className="text-black">
            <Svg w={8} h={8}><path d="M0 1h8" stroke="#000" /><path d="M0 3h8L4 7z" fill="#000" /></Svg>
          </button>
        </div>
        <h1 className="flex-1 pt-[3px] text-center leading-4 whitespace-nowrap text-[#7f7f7f]">广联达预算计价 - [清单计价 - 单位工程]</h1>
      </header>
      <div className="flex h-[26px] items-stretch border-b border-[#9a9fa4] bg-[#e0e4e8] text-sm text-[#4a4a4a]">
        <button type="button" className="mt-[2px] flex h-[22px] w-[231px] items-center rounded-t-[3px] border border-[#2b5ba8] bg-linear-to-b from-[#2458ae] via-[#2d69c4] to-[#4d92e6] pl-1 text-white">
          <span className="font-['DejaVu_Sans',sans-serif] text-2xl leading-7 font-bold italic">GLodon</span>
          <span className="ml-[14px] text-lg leading-7 font-bold italic">广联达</span>
          <Svg w={8} h={5} className="ml-4"><path d="M0 0h8L4 5z" fill="#fff" /></Svg>
        </button>
        <nav className="flex pl-[5px]">
          <a href="#edit" className="-mb-px w-[70px] rounded-t-[3px] border border-b-0 border-[#a3a7ab] bg-white text-center leading-[22px]">编制</a>
          <a href="#adjust" className="w-[73px] text-center leading-[24px]">调价</a>
          <a href="#report" className="w-[71px] text-center leading-[24px]">报表</a>
        </nav>
      </div>
      <Ribbon />
      <div className="h-[3px] bg-linear-to-b from-[#b9bec7] to-[#dfe2e8]" />
      <nav className="flex h-9 items-center border-b-2 border-[#45b5e0]">
        {["造价分析", "工程概况", "取费设置", "分部分项", "措施项目", "其他项目", "人材机汇总", "费用汇总"].map((t) => (
          <a
            key={t}
            href="#tab"
            className={`relative flex h-full items-center justify-center border-r border-[#dcdcdc] pt-1 ${t.length === 5 ? "w-[92px]" : "w-20"} ${t === "分部分项" ? "text-[13px] font-bold text-[#00a8f3]" : ""}`}
          >
            {t}
            {t === "分部分项" && <Svg w={8} h={4} className="absolute bottom-0"><path d="M0 4 4 0l4 4z" fill="#45b5e0" /></Svg>}
          </a>
        ))}
      </nav>
      <main className="flex-1">
        <MainGrid />
      </main>
      <BottomPanel />
      <Dialog />
    </div>
  );
}
